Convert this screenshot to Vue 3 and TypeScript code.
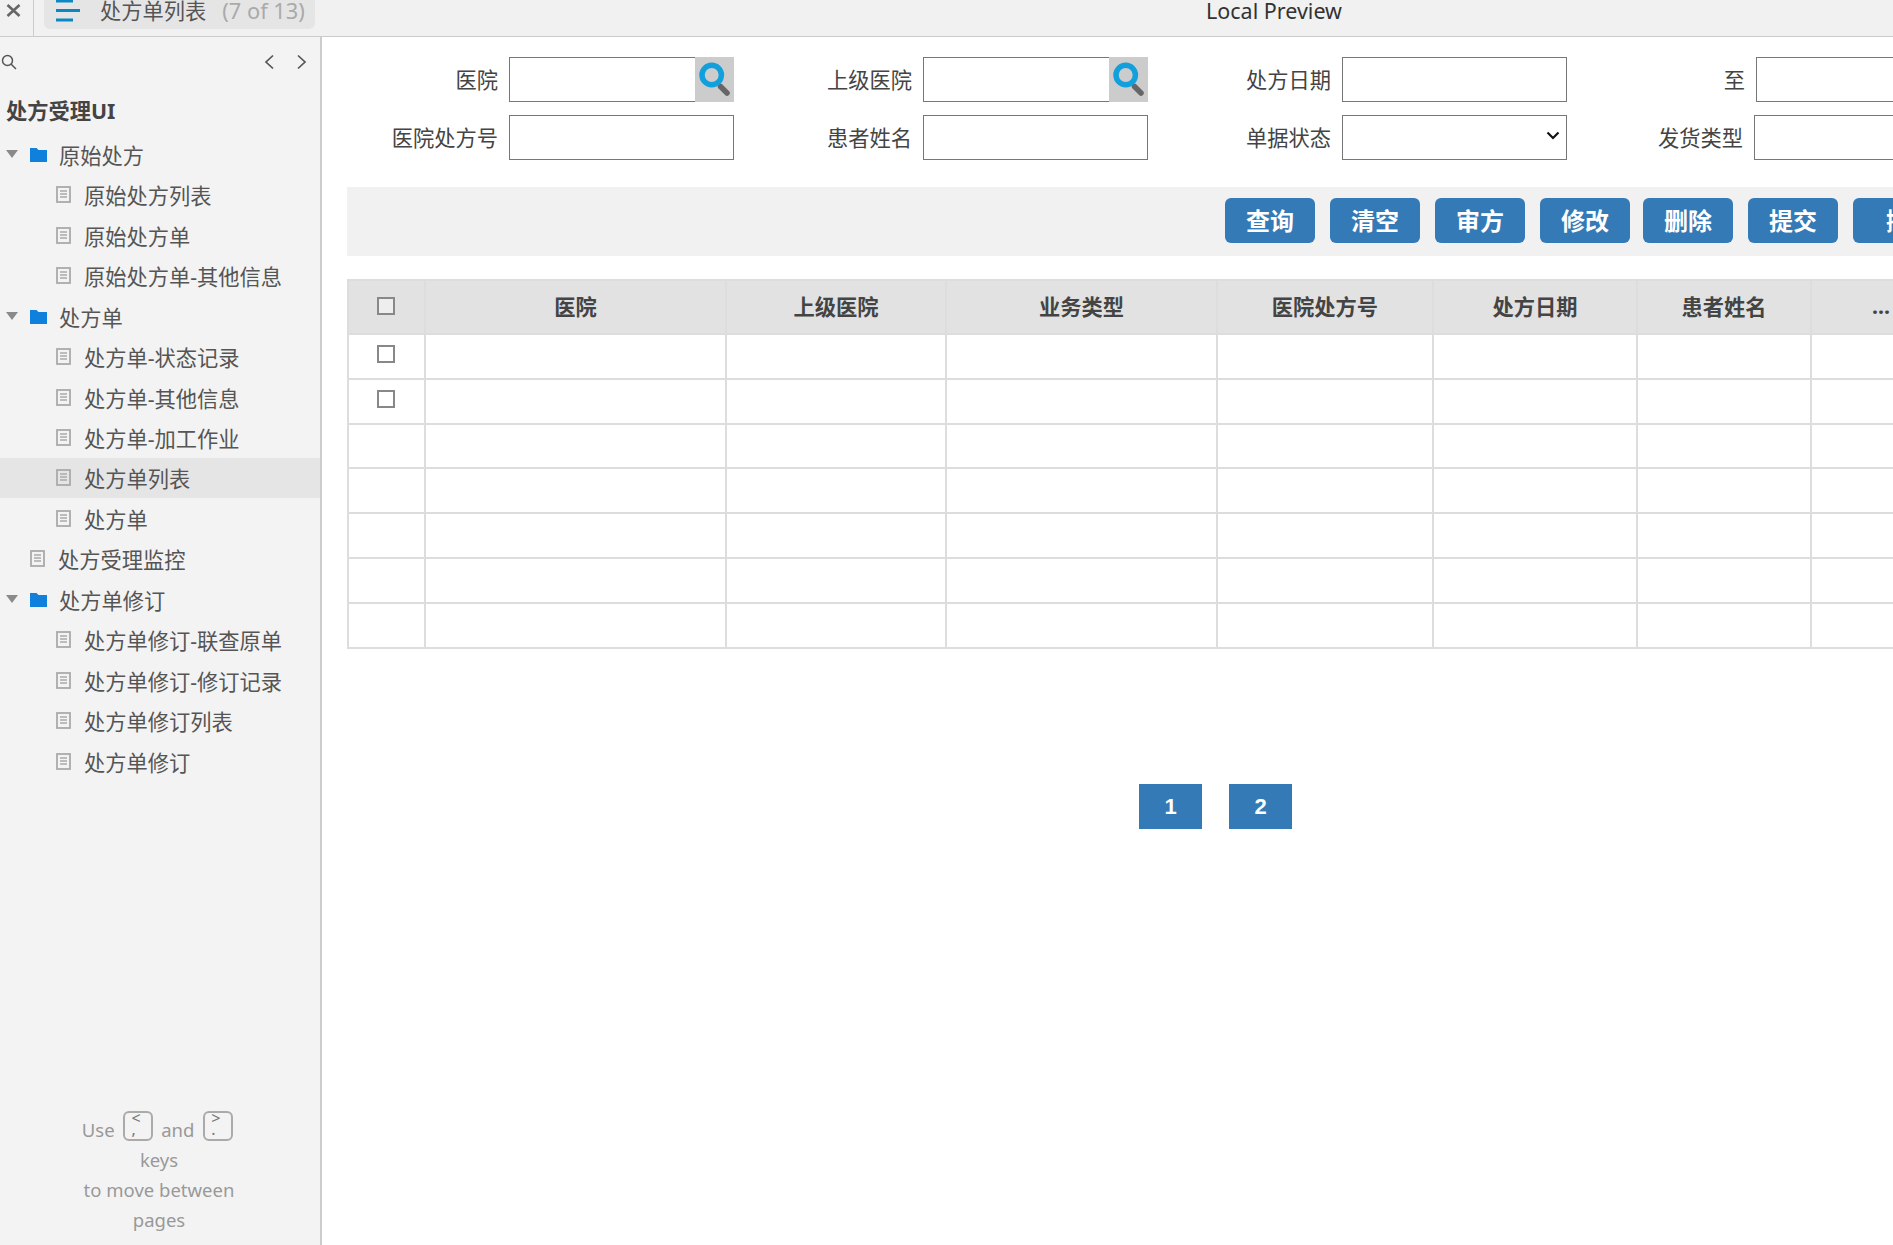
<template>
  <div class="app">
    <header class="topbar">
      <div class="close-cell">
        <svg width="15" height="13" viewBox="0 0 15 13"><path d="M1.5 1l12 11M13.5 1l-12 11" stroke="#666" stroke-width="2.6" fill="none" /></svg>
      </div>
      <div class="page-tab">
        <svg class="burger" width="24" height="24" viewBox="0 0 24 24">
          <path d="M0 1h17M0 10.5h24M0 20h17" stroke="#0b87c4" stroke-width="3" fill="none" />
        </svg>
        <span class="tab-name">处方单列表</span>
        <span class="tab-count">(7 of 13)</span>
      </div>
      <div class="preview-title">Local Preview</div>
    </header>

    <div class="body">
      <aside class="sidebar">
        <div class="side-tools">
          <svg width="16" height="16" viewBox="0 0 16 16"><circle cx="6.5" cy="6.5" r="5" fill="none" stroke="#555" stroke-width="1.5" /><path d="M10 10l5 5" stroke="#555" stroke-width="1.5" /></svg>
          <div class="pager">
            <svg width="12" height="16" viewBox="0 0 12 16"><path d="M10 1.5L3 8l7 6.5" fill="none" stroke="#555" stroke-width="1.7" /></svg>
            <svg width="12" height="16" viewBox="0 0 12 16"><path d="M2 1.5L9 8l-7 6.5" fill="none" stroke="#555" stroke-width="1.7" /></svg>
          </div>
        </div>
        <div class="project">处方受理UI</div>
        <ul class="tree">
          <li v-for="item in tree" :key="item.name" class="tree-row" :class="['lv-' + item.level, { active: item.active }]">
            <template v-if="item.folder">
              <svg class="arrow" width="12" height="8" viewBox="0 0 12 8"><path d="M0 0h12L6 8z" fill="#8a8a8a" /></svg>
              <svg class="folder" width="17" height="15" viewBox="0 0 17 15"><path d="M0 1h6.5l2 2H17v12H0z" fill="#0f80dc" /></svg>
            </template>
            <svg v-else class="doc" width="15" height="17" viewBox="0 0 15 17">
              <rect x="1" y="1" width="13" height="15" fill="none" stroke="#aaa" stroke-width="1.8" />
              <path d="M4 5h7M4 8h7M4 11h7" stroke="#aaa" stroke-width="1.3" />
            </svg>
            <span>{{ item.name }}</span>
          </li>
        </ul>
        <div class="hint">
          Use <span class="key"><i>&lt;</i><i>,</i></span> and <span class="key"><i>&gt;</i><i>.</i></span><br />
          keys<br />
          to move between<br />
          pages
        </div>
      </aside>

      <main class="main">
        <form class="filters">
          <div class="field">
            <label>医院</label>
            <div class="lookup">
              <input type="text" />
              <button type="button" class="lookup-btn">
                <svg width="39" height="45" viewBox="0 0 39 45">
                  <path d="M25.5 29.5l6.5 6.5" stroke="#666" stroke-width="5.5" stroke-linecap="round" />
                  <circle cx="16.7" cy="18" r="9.7" fill="none" stroke="#12a0dc" stroke-width="5.5" />
                </svg>
              </button>
            </div>
          </div>
          <div class="field">
            <label>上级医院</label>
            <div class="lookup">
              <input type="text" />
              <button type="button" class="lookup-btn">
                <svg width="39" height="45" viewBox="0 0 39 45">
                  <path d="M25.5 29.5l6.5 6.5" stroke="#666" stroke-width="5.5" stroke-linecap="round" />
                  <circle cx="16.7" cy="18" r="9.7" fill="none" stroke="#12a0dc" stroke-width="5.5" />
                </svg>
              </button>
            </div>
          </div>
          <div class="field">
            <label>处方日期</label>
            <input type="text" />
          </div>
          <div class="field last">
            <label class="w-178">至</label>
            <input type="text" />
          </div>

          <div class="field">
            <label>医院处方号</label>
            <input type="text" />
          </div>
          <div class="field">
            <label>患者姓名</label>
            <input type="text" />
          </div>
          <div class="field">
            <label>单据状态</label>
            <div class="select-wrap">
              <select></select>
              <svg class="select-arrow" width="14" height="9" viewBox="0 0 14 9"><path d="M1.5 1.5L7 7l5.5-5.5" fill="none" stroke="#111" stroke-width="2.2" /></svg>
            </div>
          </div>
          <div class="field last">
            <label class="w-176">发货类型</label>
            <input type="text" />
          </div>
        </form>

        <div class="toolbar">
          <button v-for="b in buttons" :key="b" type="button" class="btn">{{ b }}</button>
        </div>

        <table class="grid">
          <colgroup>
            <col v-for="(w, i) in colWidths" :key="i" :style="{ width: w + 'px' }" />
          </colgroup>
          <thead>
            <tr>
              <th class="check-col"><span class="check head-check" /></th>
              <th v-for="c in columns" :key="c">{{ c }}</th>
            </tr>
          </thead>
          <tbody>
            <tr v-for="r in 7" :key="r">
              <td class="check-col check-cell"><span v-if="r < 3" class="check" /></td>
              <td v-for="c in columns" :key="c" />
            </tr>
          </tbody>
        </table>

        <div class="pagination">
          <a class="page-no">1</a>
          <a class="page-no">2</a>
        </div>
      </main>
    </div>
  </div>
</template>

<script setup lang="ts">
interface TreeItem {
  name: string
  level: number
  folder?: boolean
  active?: boolean
}

const tree: TreeItem[] = [
  { name: '原始处方', level: 0, folder: true },
  { name: '原始处方列表', level: 1 },
  { name: '原始处方单', level: 1 },
  { name: '原始处方单-其他信息', level: 1 },
  { name: '处方单', level: 0, folder: true },
  { name: '处方单-状态记录', level: 1 },
  { name: '处方单-其他信息', level: 1 },
  { name: '处方单-加工作业', level: 1 },
  { name: '处方单列表', level: 1, active: true },
  { name: '处方单 ', level: 1 },
  { name: '处方受理监控', level: 0 },
  { name: '处方单修订', level: 0, folder: true },
  { name: '处方单修订-联查原单', level: 1 },
  { name: '处方单修订-修订记录', level: 1 },
  { name: '处方单修订列表', level: 1 },
  { name: '处方单修订', level: 1 }
]

const buttons = ['查询', '清空', '审方', '修改', '删除', '提交', '撤回']
const columns = ['医院', '上级医院', '业务类型', '医院处方号', '处方日期', '患者姓名', '...']
const colWidths = [77, 301, 220, 271, 216, 204, 174, 140]
</script>

<style>
html, body { margin: 0; overflow: hidden; background: #fff; }
</style>

<style scoped>
.app { width: 1893px; height: 1245px; overflow: hidden; display: flex; flex-direction: column; font-family: "Noto Sans", "Noto Sans CJK SC", sans-serif; color: #444; }

/* top bar */
.topbar { height: 37px; box-sizing: border-box; flex: none; display: flex; align-items: flex-start; background: #f1f1f1; border-bottom: 1.5px solid #ccc; }
.close-cell { width: 34px; height: 36px; border-right: 1px solid #ccc; padding: 4px 0 0 6px; box-sizing: border-box; line-height: 0; }
.page-tab { margin-left: 10px; width: 271px; height: 29px; display: flex; background: #e5e5e5; border-radius: 0 0 6px 6px; font-size: 21.25px; line-height: 22px; }
.burger { margin-left: 12px; flex: none; }
.tab-name { margin-left: 20px; color: #555; }
.tab-count { margin-left: 16px; color: #aaa; font-size: 21.8px; }
.preview-title { padding-left: 891px; font-size: 21.5px; line-height: 22px; color: #333; white-space: nowrap; }

.body { flex: 1; display: flex; min-height: 0; }

/* sidebar */
.sidebar { width: 322px; flex: none; box-sizing: border-box; display: flex; flex-direction: column; background: #f3f3f3; border-right: 2px solid #ccc; }
.side-tools { height: 49px; flex: none; display: flex; align-items: center; justify-content: space-between; padding: 0 12px 0 1px; }
.pager { display: flex; gap: 21px; }
.project { margin-top: 10px; padding-left: 6px; font-size: 21.25px; line-height: 30px; font-weight: 700; color: #444; }
.tree { list-style: none; margin: 8px 0 0; padding: 0; }
.tree-row { height: 40.48px; display: flex; align-items: center; font-size: 21.25px; color: #555; white-space: nowrap; }
.tree-row.active { background: #e5e5e5; }
.tree-row .arrow { margin-left: 6px; flex: none; }
.tree-row .folder { margin-left: 12px; margin-right: 12px; flex: none; }
.lv-0 .doc { margin-left: 30px; margin-right: 13px; }
.lv-1 .doc { margin-left: 56px; margin-right: 13px; }
.hint { margin-top: auto; padding: 0 2px 10px 0; text-align: center; font-size: 18.5px; line-height: 30px; color: #999; }
.key { display: inline-block; overflow: hidden; vertical-align: -4px; width: 30px; height: 30px; box-sizing: border-box; margin: -10px 3px 0 4px; padding-left: 6px; border: 2px solid #aaa; border-radius: 6px; font-size: 16px; line-height: 11px; color: #777; text-align: left; }
.key i { display: block; font-style: normal; }

/* filter form */
.main { flex: 1; min-width: 0; }
.filters { height: 150px; box-sizing: border-box; padding-top: 20px; display: grid; grid-template-columns: 412px 414px 419px 1fr; grid-template-rows: 45px 45px; row-gap: 13px; }
.field { display: flex; justify-content: flex-end; align-items: stretch; font-size: 21.25px; color: #444; }
.field label { align-self: center; margin: -3px 11px 0 0; white-space: nowrap; text-align: right; }
.field.last { justify-content: flex-start; }
.w-178 { width: 178px; }
.w-176 { width: 176px; }
.field input, .field select { width: 225px; height: 45px; box-sizing: border-box; border: 1.5px solid #777; background: #fff; border-radius: 0; flex: none; }
.lookup { width: 225px; display: flex; }
.lookup input { width: 186px; border-right: 0; }
.lookup-btn { width: 39px; height: 45px; padding: 0; border: 0; background: #ccc; display: block; }
.lookup-btn svg { display: block; }
.select-wrap { position: relative; width: 225px; }
.select-wrap select { appearance: none; display: block; }
.select-arrow { position: absolute; right: 7px; top: 16px; pointer-events: none; }

/* action bar */
.toolbar { height: 69px; margin-left: 25px; padding: 11px 0 0 878px; box-sizing: border-box; display: flex; gap: 15px; align-items: flex-start; background: #f1f1f1; }
.btn { width: 90px; height: 45px; flex: none; padding: 0; border: 0; border-radius: 6px; background: #337ab7; color: #fff; font-family: inherit; font-size: 24px; font-weight: 700; line-height: 45px; }
.btn:nth-child(5) { margin-left: -2px; }
.btn:last-child { width: 114px; }

/* table */
.grid { margin: 23px 0 0 25px; table-layout: fixed; width: 1603px; border-collapse: collapse; border: 2px solid #ddd; }
.grid th, .grid td { border: 2px solid #ddd; padding: 0; }
.grid th { height: 49px; padding-bottom: 3px; background: #e2e2e2; font-size: 21.25px; font-weight: 700; color: #444; }
.grid td { height: 44.8px; box-sizing: border-box; }
.grid .check-col { padding-right: 2px; }
.check { display: block; width: 18px; height: 18px; box-sizing: border-box; border: 2px solid #888; margin: 0 auto; background: #fff; }
.head-check { background: #eee; }
.grid .check-cell { vertical-align: top; padding-top: 10px; }

/* pagination */
.pagination { margin: 135px 0 0 817px; display: flex; gap: 27px; }
.page-no { width: 63px; height: 45px; background: #337ab7; color: #fff; text-align: center; font: 700 22px/45px "Liberation Sans", Arial, sans-serif; }
</style>
